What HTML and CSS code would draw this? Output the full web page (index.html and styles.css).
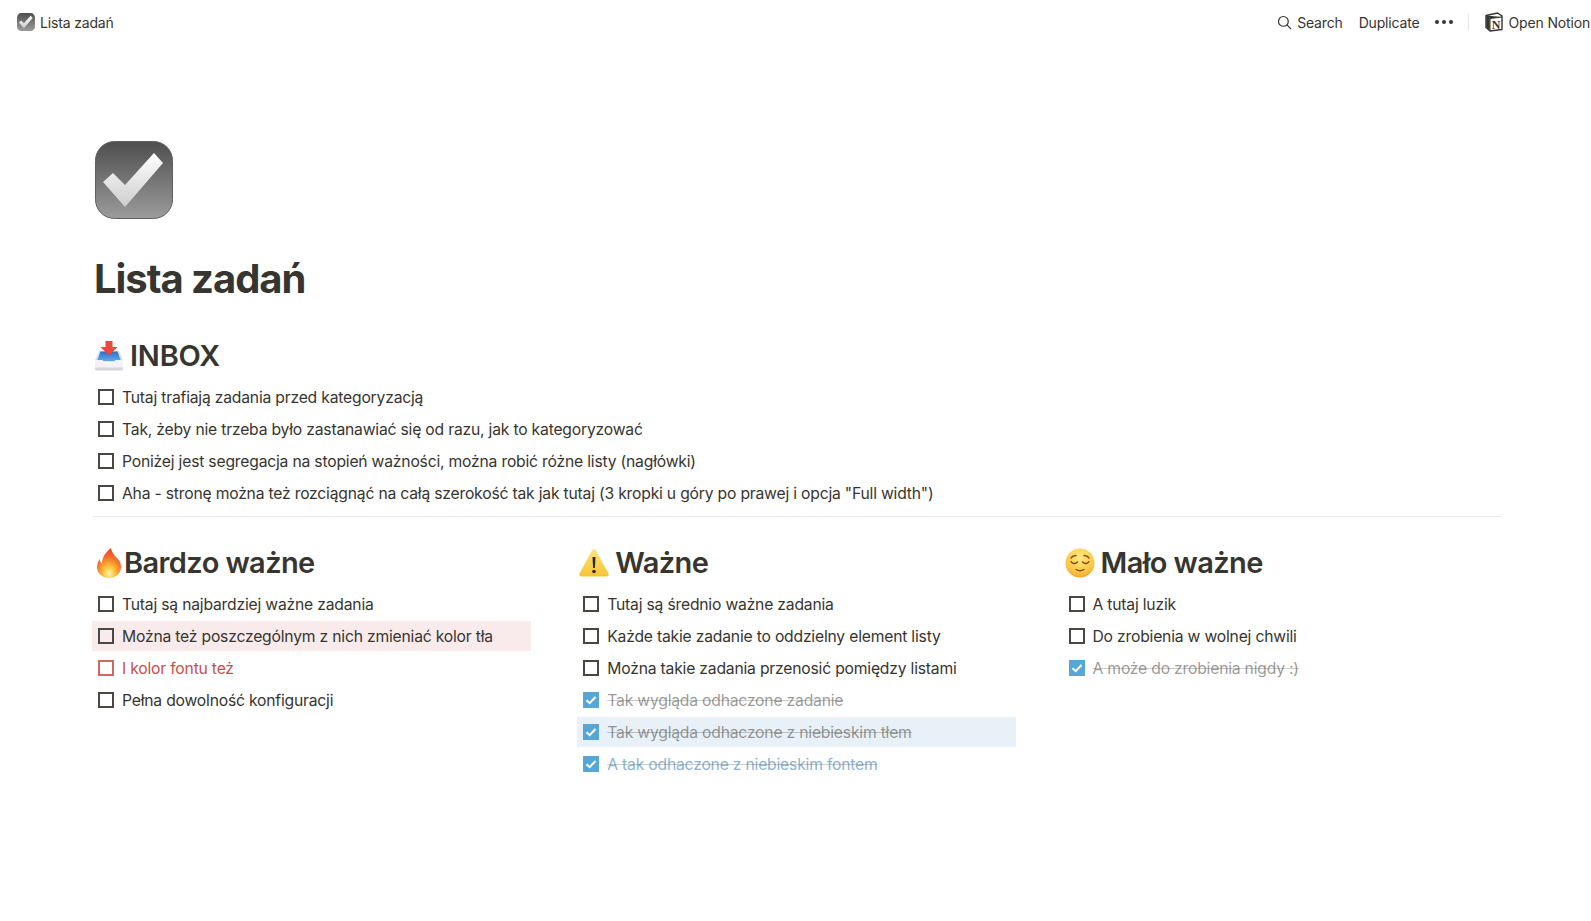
FILE: index.html
```html
<!DOCTYPE html>
<html lang="pl">

<head>
    <meta charset="UTF-8">
    <meta name="viewport" content="width=device-width, initial-scale=1.0">
    <title>Lista zadań</title>
    <link rel="stylesheet" href="styles.css">
</head>

<body>
    <header class="topbar">
        <div class="crumb">
            <svg class="crumb-icon" viewBox="0 0 78 78">
                <use href="#check-badge"></use>
            </svg>
            <span>Lista zadań</span>
        </div>
        <nav class="actions">
            <span class="action">
                <svg class="search-icon" viewBox="0 0 16 16">
                    <circle cx="6.8" cy="6.8" r="5.2"></circle>
                    <path d="M10.6 10.6 15 15"></path>
                </svg>
                Search
            </span>
            <span class="action">Duplicate</span>
            <span class="dots"><i></i><i></i><i></i></span>
            <span class="sep"></span>
            <span class="action open">
                <svg class="notion-icon" viewBox="0 0 18 20">
                    <path class="n-side" d="M1 3.500 12.500 1 17 3.800V17.500L5 19 1 15.500Z"></path>
                    <path class="n-line" d="M1 3.500 5 6.500 17 5M5 6.500V19M1.800 4V15.200L4.200 17.500V6.800Z"></path>
                    <text class="n-mark" x="11" y="16.500">N</text>
                </svg>
                Open Notion
            </span>
        </nav>
    </header>

    <main class="page">
        <svg class="page-icon" viewBox="0 0 78 78">
            <defs>
                <linearGradient id="badge-bg" x1="0" y1="0" x2="0" y2="1">
                    <stop offset="0" stop-color="#4e4e4e"></stop>
                    <stop offset="1" stop-color="#9c9c9c"></stop>
                </linearGradient>
                <linearGradient id="badge-tick" x1="0" y1="0" x2="0" y2="1">
                    <stop offset="0" stop-color="#ffffff"></stop>
                    <stop offset="1" stop-color="#cdcdcd"></stop>
                </linearGradient>
                <g id="check-badge">
                    <rect x="0.5" y="0.5" width="77" height="77" rx="19" fill="url(#badge-bg)" stroke="#5f5f5f"></rect>
                    <path d="M8 41 18 32 30 44 59 12 68 22 30 66Z" fill="url(#badge-tick)"></path>
                </g>
            </defs>
            <use href="#check-badge"></use>
        </svg>

        <h1 class="title">Lista zadań</h1>

        <h2 class="heading caps">
            <svg class="emoji" viewBox="0 0 30 30">
                <defs>
                    <linearGradient id="tray-blue" x1="0" y1="0" x2="0" y2="1">
                        <stop offset="0" stop-color="#2c6fc4"></stop>
                        <stop offset="1" stop-color="#62a8ee"></stop>
                    </linearGradient>
                </defs>
                <path d="M5 10h20l4 9v2H1v-2Z" fill="#d9e2ec"></path>
                <path d="M6.500 10.500h17L27 20H3Z" fill="url(#tray-blue)"></path>
                <path d="M11.500 0h7v6h5l-8.500 8.500L6.500 6h5Z" fill="#e8483f"></path>
                <path d="M1 19h7.500c1 2.500 3 3.500 6.500 3.500s5.500-1 6.500-3.500H29v9c0 .8-.7 1.500-1.500 1.500h-25C1.700 29.500 1 28.800 1 28Z" fill="#f3f3f5"></path>
                <path d="M1 26.500h28V28c0 .8-.7 1.500-1.500 1.500h-25C1.700 29.500 1 28.800 1 28Z" fill="#d8d8dc"></path>
            </svg>
            INBOX
        </h2>
        <ul class="todos">
            <li class="todo"><span class="box"></span><span>Tutaj trafiają zadania przed kategoryzacją</span></li>
            <li class="todo"><span class="box"></span><span>Tak, żeby nie trzeba było zastanawiać się od razu, jak to kategoryzować</span></li>
            <li class="todo"><span class="box"></span><span>Poniżej jest segregacja na stopień ważności, można robić różne listy (nagłówki)</span></li>
            <li class="todo"><span class="box"></span><span>Aha - stronę można też rozciągnąć na całą szerokość tak jak tutaj (3 kropki u góry po prawej i opcja "Full width")</span></li>
        </ul>

        <hr class="divider">

        <section class="columns">
            <div class="col">
                <h2 class="heading tight">
                    <svg class="emoji" viewBox="0 0 30 30">
                        <defs>
                            <radialGradient id="flame" cx="0.5" cy="0.85" r="0.8">
                                <stop offset="0" stop-color="#fff6b5"></stop>
                                <stop offset="0.3" stop-color="#fdc437"></stop>
                                <stop offset="0.65" stop-color="#f6752c"></stop>
                                <stop offset="1" stop-color="#e8432a"></stop>
                            </radialGradient>
                        </defs>
                        <path d="M17 0c1 5 3 7 6 10 3 3 4 6 4 9 0 6-5 11-12 11S3 25 3 19c0-3 1-6 3-8 0 2 .5 3.500 2 4.500C8 9 12 4 17 0Z" fill="url(#flame)"></path>
                    </svg>
                    Bardzo ważne
                </h2>
                <ul class="todos">
                    <li class="todo"><span class="box"></span><span>Tutaj są najbardziej ważne zadania</span></li>
                    <li class="todo bg-red"><span class="box"></span><span>Można też poszczególnym z nich zmieniać kolor tła</span></li>
                    <li class="todo red"><span class="box"></span><span>I kolor fontu też</span></li>
                    <li class="todo"><span class="box"></span><span>Pełna dowolność konfiguracji</span></li>
                </ul>
            </div>

            <div class="col">
                <h2 class="heading">
                    <svg class="emoji" viewBox="0 0 30 30">
                        <defs>
                            <linearGradient id="warn" x1="0" y1="0" x2="0" y2="1">
                                <stop offset="0" stop-color="#fde27a"></stop>
                                <stop offset="1" stop-color="#f8c437"></stop>
                            </linearGradient>
                        </defs>
                        <path d="M13 2.500c.9-1.600 3.100-1.600 4 0l12.500 23c.8 1.500-.2 3-2 3H2.500c-1.800 0-2.800-1.500-2-3Z" fill="url(#warn)"></path>
                        <path d="M13.500 9h3l-.6 11h-1.800Z" fill="#2b2b2b"></path>
                        <circle cx="15" cy="23.500" r="1.800" fill="#2b2b2b"></circle>
                    </svg>
                    Ważne
                </h2>
                <ul class="todos">
                    <li class="todo"><span class="box"></span><span>Tutaj są średnio ważne zadania</span></li>
                    <li class="todo"><span class="box"></span><span>Każde takie zadanie to oddzielny element listy</span></li>
                    <li class="todo"><span class="box"></span><span>Można takie zadania przenosić pomiędzy listami</span></li>
                    <li class="todo done"><span class="box"><svg viewBox="0 0 16 16"><path d="M3.500 8.200 6.700 11.200 12.500 5"></path></svg></span><span class="txt">Tak wygląda odhaczone zadanie</span></li>
                    <li class="todo done bg-blue"><span class="box"><svg viewBox="0 0 16 16"><path d="M3.500 8.200 6.700 11.200 12.500 5"></path></svg></span><span class="txt">Tak wygląda odhaczone z niebieskim tłem</span></li>
                    <li class="todo done blue"><span class="box"><svg viewBox="0 0 16 16"><path d="M3.500 8.200 6.700 11.200 12.500 5"></path></svg></span><span class="txt">A tak odhaczone z niebieskim fontem</span></li>
                </ul>
            </div>

            <div class="col">
                <h2 class="heading">
                    <svg class="emoji" viewBox="0 0 30 30">
                        <defs>
                            <radialGradient id="face" cx="0.5" cy="0.3" r="0.75">
                                <stop offset="0" stop-color="#fee883"></stop>
                                <stop offset="0.7" stop-color="#fbc544"></stop>
                                <stop offset="1" stop-color="#f29a2c"></stop>
                            </radialGradient>
                        </defs>
                        <circle cx="15" cy="15" r="14.500" fill="url(#face)"></circle>
                        <g class="face-lines">
                            <path d="M6 13.500c1.500 2.500 4.500 2.500 6.500 .5"></path>
                            <path d="M24 13.500c-1.500 2.500-4.500 2.500-6.500 .5"></path>
                            <path d="M11 21.500c2.500 1.500 5.500 1.500 8 0"></path>
                            <path d="M6 10c1-1.500 3-2.500 5-2.500M24 10c-1-1.500-3-2.500-5-2.500"></path>
                        </g>
                    </svg>
                    Mało ważne
                </h2>
                <ul class="todos">
                    <li class="todo"><span class="box"></span><span>A tutaj luzik</span></li>
                    <li class="todo"><span class="box"></span><span>Do zrobienia w wolnej chwili</span></li>
                    <li class="todo done"><span class="box"><svg viewBox="0 0 16 16"><path d="M3.500 8.200 6.700 11.200 12.500 5"></path></svg></span><span class="txt">A może do zrobienia nigdy :)</span></li>
                </ul>
            </div>
        </section>
    </main>
</body>

</html>
```

FILE: styles.css
```css
* {
    box-sizing: border-box;
    font-family: Inter, 'Liberation Sans', sans-serif;
}

body {
    margin: 0;
    background: #fff;
    color: #37352f;
    overflow: hidden;
}

ul {
    list-style: none;
    margin: 0;
    padding: 0;
}

.topbar {
    display: flex;
    justify-content: space-between;
    align-items: center;
    height: 44px;
    font-size: 14px;
    letter-spacing: -0.16px;
}

.crumb {
    display: flex;
    align-items: center;
    gap: 5px;
    padding-left: 17px;
}

.crumb-icon {
    width: 18px;
    height: 18px;
}

.actions {
    display: flex;
    align-items: center;
}

.action {
    display: flex;
    align-items: center;
    gap: 5px;
    margin-right: 16px;
    white-space: nowrap;
}

.action.open {
    gap: 6px;
    margin-right: 1px;
}

.search-icon {
    width: 15px;
    height: 15px;
    fill: none;
    stroke: #37352f;
    stroke-width: 1.3;
}

.dots {
    display: flex;
    gap: 3px;
    margin: 0 15px 0 -1px;

    i {
        width: 4px;
        height: 4px;
        border-radius: 50%;
        background: #37352f;
    }
}

.sep {
    width: 1px;
    height: 16px;
    background: #e6e6e4;
    margin-right: 16px;
}

.notion-icon {
    width: 18px;
    height: 20px;

    .n-side {
        fill: #fff;
        stroke: #37352f;
        stroke-width: 1.400;
        stroke-linejoin: round;
    }

    .n-line {
        fill: #37352f;
        stroke: #37352f;
        stroke-width: 1;
    }

    .n-mark {
        font-family: 'Liberation Serif', serif;
        font-size: 12px;
        font-weight: 700;
        letter-spacing: 0;
        text-anchor: middle;
        fill: #37352f;
    }
}

.page {
    padding: 97px 89px 0 92px;
}

.page-icon {
    display: block;
    width: 78px;
    height: 78px;
    margin-left: 3px;
}

.title {
    margin: 36px 0 33px 2px;
    font-size: 40px;
    line-height: 48px;
    font-weight: 700;
    letter-spacing: -1.05px;
}

.heading {
    display: flex;
    align-items: center;
    gap: 6px;
    height: 39px;
    margin: 25px 0 7px 2px;
    font-size: 29px;
    font-weight: 600;
    letter-spacing: -0.6px;
}

.heading.tight {
    gap: 0;
}

.heading.caps {
    letter-spacing: -0.2px;
}

.emoji {
    width: 30px;
    height: 30px;
    flex-shrink: 0;

    .face-lines {
        fill: none;
        stroke: #7a4a12;
        stroke-width: 1.400;
        stroke-linecap: round;
    }
}

.todo {
    display: flex;
    align-items: center;
    gap: 8px;
    height: 30px;
    margin-bottom: 2px;
    padding-left: 6px;
    font-size: 15.700px;
    letter-spacing: -0.2px;
    white-space: nowrap;
}

.box {
    display: flex;
    width: 16px;
    height: 16px;
    border: 2px solid #4a4843;
    flex-shrink: 0;

    svg {
        fill: none;
        stroke: #fff;
        stroke-width: 2;
    }
}

.done {
    .box {
        border: 0;
        background: #55a7d8;
    }

    .txt {
        color: rgba(55, 53, 47, 0.5);
        text-decoration: line-through;
        text-decoration-color: rgba(55, 53, 47, 0.25);
    }
}

.bg-red {
    background: #f9ebeb;
}

.red {
    color: #c4504c;

    .box {
        border-color: #cf6763;
    }
}

.bg-blue {
    background: #e8f1f7;
}

.blue .txt {
    color: #8eb3d1;
}

.divider {
    height: 1px;
    border: 0;
    margin: 8px 0 0;
    background: #e9e9e7;
}

.columns {
    display: grid;
    grid-template-columns: repeat(3, 439px);
    column-gap: 46.250px;
    margin-top: 1px;
}
```
